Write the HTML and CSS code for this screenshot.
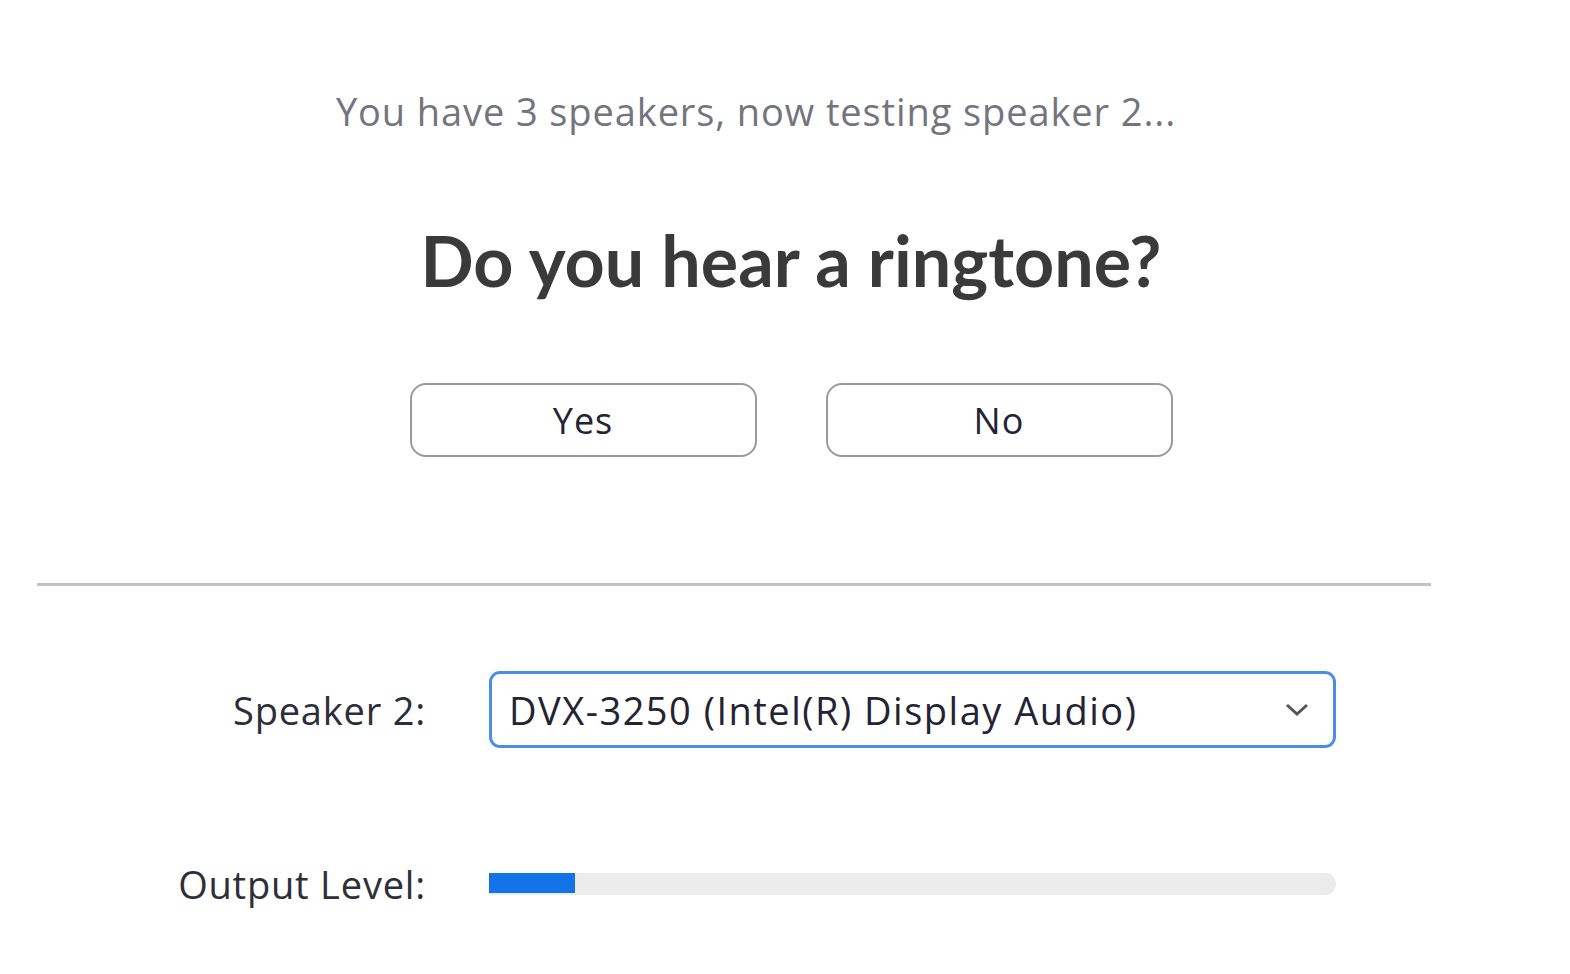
FILE: index.html
```html
<!DOCTYPE html>
<html>
<head>
<meta charset="utf-8">
<link rel="stylesheet" href="styles.css">
</head>
<body>
<div class="dialog">
  <section class="test">
    <p class="subtitle">You have 3 speakers, now testing speaker 2...</p>
    <h1 class="question">Do you hear a ringtone?</h1>
    <div class="buttons">
      <button class="btn">Yes</button>
      <button class="btn">No</button>
    </div>
  </section>
  <hr class="divider">
  <section class="settings">
    <div class="label">Speaker 2:</div>
    <div class="select">
      <span class="select-text">DVX-3250 (Intel(R) Display Audio)</span>
      <svg class="chevron" width="24" height="14" viewBox="0 0 24 14"><path d="M2 2 L12 11 L22 2" fill="none" stroke="#555" stroke-width="3"/></svg>
    </div>
    <div class="label level-label">Output Level:</div>
    <div class="meter"><div class="meter-fill" style="width:86px"></div></div>
  </section>
</div>
</body>
</html>
```

FILE: styles.css
```css
html, body {
  margin: 0;
  padding: 0;
  background: #fff;
}
body {
  width: 1570px;
  height: 974px;
  overflow: hidden;
  font-family: "Open Sans", "Noto Sans", sans-serif;
}
.dialog {
  display: flex;
  flex-direction: column;
}
.test {
  padding-left: 12px;
  display: flex;
  flex-direction: column;
  align-items: center;
}
.subtitle {
  margin: 86px 70px 0 0;
  font-size: 38px;
  line-height: 50px;
  color: #74747f;
  letter-spacing: 0.9px;
}
.question {
  margin: 84px 0 0 0;
  font-family: "Lato", sans-serif;
  font-weight: 700;
  font-size: 70px;
  line-height: 80px;
  color: #3a3a3a;
}
.buttons {
  margin-top: 83px;
  display: flex;
  gap: 69px;
}
.btn {
  width: 347px;
  height: 74px;
  background: #fff;
  border: 2px solid #9a9a9a;
  border-radius: 16px;
  font-family: "Open Sans", sans-serif;
  font-size: 36px;
  letter-spacing: 1px;
  color: #232333;
  padding: 0;
}
.divider {
  margin: 126px 0 0 37px;
  width: 1394px;
  height: 3px;
  border: 0;
  background: #c2c2c2;
}
.settings {
  margin-top: 85px;
  display: grid;
  grid-template-columns: 426px 847px;
  column-gap: 63px;
  row-gap: 110px;
  align-items: center;
}
.label {
  text-align: right;
  font-size: 38px;
  color: #2e2e38;
  letter-spacing: 0.8px;
}
.select {
  height: 77px;
  box-sizing: border-box;
  border: 3px solid #4a8fe3;
  border-radius: 11px;
  display: flex;
  align-items: center;
  justify-content: space-between;
  padding: 0 24px 0 17px;
}
.select-text {
  font-size: 38px;
  color: #232333;
  letter-spacing: 1.5px;
}
.chevron {
  display: block;
}
.meter {
  height: 22px;
  background: #ececec;
  border-radius: 0 11px 11px 0;
  overflow: hidden;
}
.meter-fill {
  height: 20px;
  background: #1473e6;
}
```
